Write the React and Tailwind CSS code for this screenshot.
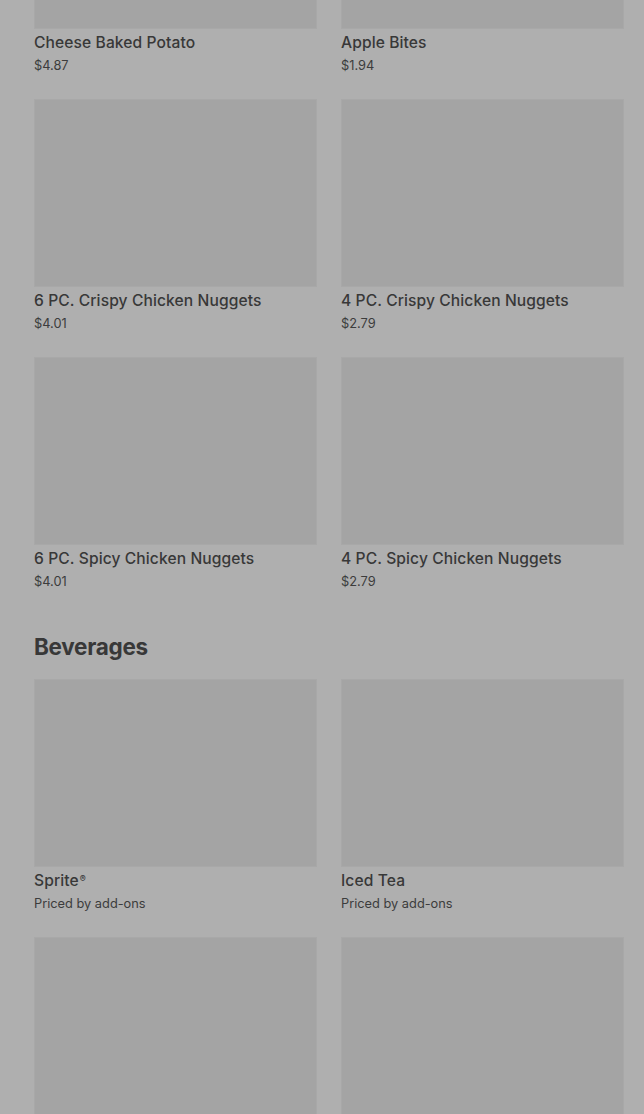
import React from 'react';

const sides = [
  { name: 'Cheese Baked Potato', price: '$4.87' },
  { name: 'Apple Bites', price: '$1.94' },
  { name: '6 PC. Crispy Chicken Nuggets', price: '$4.01' },
  { name: '4 PC. Crispy Chicken Nuggets', price: '$2.79' },
  { name: '6 PC. Spicy Chicken Nuggets', price: '$4.01' },
  { name: '4 PC. Spicy Chicken Nuggets', price: '$2.79' },
];

const drinks = [
  { name: 'Sprite', reg: true, price: 'Priced by add-ons' },
  { name: 'Iced Tea', price: 'Priced by add-ons' },
  { name: '', price: '' },
  { name: '', price: '' },
];

function Item({ item }) {
  return (
    <div className="h-[258px]">
      <div className="h-[188px] bg-[#a4a4a4] border border-[#a8a8a8]" />
      {item.name && (
        <>
          <div className="pt-[2px] text-[15.6px] leading-[24px] font-medium text-[#383838] tracking-[0.1px]">
            {item.name}
            {item.reg && <sup className="text-[9px] ml-[1px]">®</sup>}
          </div>
          <div className="mt-[1px] text-[12.8px] leading-[20px] text-[#3c3c3c]">{item.price}</div>
        </>
      )}
    </div>
  );
}

export default function App() {
  return (
    <div className="h-screen overflow-hidden bg-[#afafaf]" style={{ fontFamily: 'Inter, "Noto Sans", sans-serif' }}>
      <div className="-mt-[159px] pl-[34px] pr-[20px]">
        <div className="grid grid-cols-2 gap-x-[24px]">
          {sides.map((s) => (
            <Item key={s.name} item={s} />
          ))}
        </div>

        <h2 className="mt-[16px] mb-[16px] h-[32px] text-[22.5px] leading-[32px] font-bold text-[#383838] tracking-[-0.3px]">
          Beverages
        </h2>

        <div className="grid grid-cols-2 gap-x-[24px]">
          {drinks.map((d, i) => (
            <Item key={i} item={d} />
          ))}
        </div>
      </div>
    </div>
  );
}
